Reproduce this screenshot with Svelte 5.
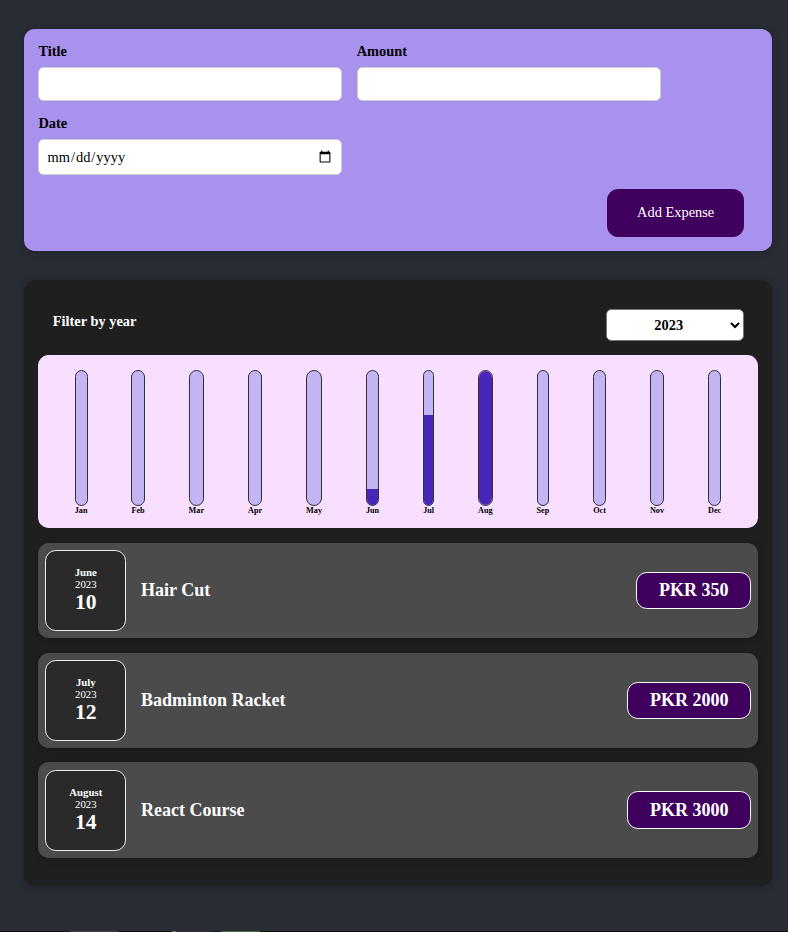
<script>
  const months = [
    { label: 'Jan', fill: 0 },
    { label: 'Feb', fill: 0 },
    { label: 'Mar', fill: 0 },
    { label: 'Apr', fill: 0 },
    { label: 'May', fill: 0 },
    { label: 'Jun', fill: 11.67 },
    { label: 'Jul', fill: 66.67 },
    { label: 'Aug', fill: 100 },
    { label: 'Sep', fill: 0 },
    { label: 'Oct', fill: 0 },
    { label: 'Nov', fill: 0 },
    { label: 'Dec', fill: 0 }
  ];

  const expenses = [
    { month: 'June', year: 2023, day: 10, title: 'Hair Cut', amount: 350 },
    { month: 'July', year: 2023, day: 12, title: 'Badminton Racket', amount: 2000 },
    { month: 'August', year: 2023, day: 14, title: 'React Course', amount: 3000 }
  ];
</script>

<div class="page">
  <main>
    <section class="new-expense">
      <form>
        <div class="controls">
          <div class="control">
            <label for="title">Title</label>
            <input id="title" type="text" />
          </div>
          <div class="control">
            <label for="amount">Amount</label>
            <input id="amount" type="number" />
          </div>
          <div class="control">
            <label for="date">Date</label>
            <input id="date" type="date" />
          </div>
        </div>
        <div class="actions">
          <button type="button">Add Expense</button>
        </div>
      </form>
    </section>

    <section class="expenses">
      <div class="filter">
        <label for="year">Filter by year</label>
        <select id="year">
          <option>2023</option>
          <option>2022</option>
          <option>2021</option>
        </select>
      </div>

      <div class="chart">
        {#each months as m}
          <div class="bar">
            <div class="inner">
              <div class="fill" style="height: {m.fill}%"></div>
            </div>
            <div class="bar-label">{m.label}</div>
          </div>
        {/each}
      </div>

      <ul>
        {#each expenses as e}
          <li class="item">
            <div class="date">
              <div class="month">{e.month}</div>
              <div class="year">{e.year}</div>
              <div class="day">{e.day}</div>
            </div>
            <div class="desc">
              <h2>{e.title}</h2>
              <div class="price">PKR {e.amount}</div>
            </div>
          </li>
        {/each}
      </ul>
    </section>
  </main>

  <div class="strip">
    <span class="s1"></span>
    <span class="s2"></span>
    <span class="s3"></span>
    <span class="s4"></span>
  </div>
</div>

<style>
  :global(body) {
    margin: 0;
    background: #282c35;
    font-family: "Liberation Serif", "Times New Roman", serif;
    font-size: 14.4px;
  }

  .page {
    height: 932px;
    display: flex;
    flex-direction: column;
    overflow: hidden;
  }

  main {
    flex: 1;
    min-height: 0;
    padding-left: 8px;
  }

  .new-expense {
    background: #a892ee;
    padding: 14.4px;
    margin: 28.8px auto;
    width: 748px;
    box-sizing: border-box;
    border-radius: 10.8px;
    box-shadow: 0 1px 7px rgba(0, 0, 0, 0.25);
  }

  .controls {
    display: flex;
    flex-wrap: wrap;
    gap: 14.4px;
    margin-bottom: 14.4px;
  }

  .control label {
    display: block;
    font-weight: bold;
    margin-bottom: 7.2px;
  }

  .control input {
    font: inherit;
    padding: 7.2px;
    border-radius: 5.4px;
    border: 1px solid #ccc;
    width: 287.5px;
    background: #fff;
    color: #000;
  }

  .actions {
    text-align: right;
  }

  button {
    font: inherit;
    padding: 14.4px 28.8px;
    border: 1px solid #40005d;
    background: #40005d;
    color: #fff;
    border-radius: 10.8px;
    margin-right: 13.6px;
  }

  .expenses {
    background: #1f1f1f;
    padding: 14.4px;
    margin: 28.8px auto;
    width: 748px;
    box-sizing: border-box;
    border-radius: 10.8px;
    box-shadow: 0 1px 7px rgba(0, 0, 0, 0.25);
  }

  .filter {
    display: flex;
    justify-content: space-between;
    align-items: center;
    color: #fff;
    margin: 14.4px 0;
    padding: 0 13.8px 0 14.4px;
  }

  .filter label {
    display: block;
    font-weight: bold;
    margin-bottom: 7.2px;
  }

  select {
    font: inherit;
    font-weight: bold;
    height: 32px;
    padding: 0 43.5px;
    border-radius: 5.4px;
    background: #fff;
    color: #000;
    border: 1px solid #767676;
  }

  .chart {
    padding: 14.4px;
    border-radius: 10.8px;
    background: #f8dfff;
    display: flex;
    justify-content: space-around;
    height: 144px;
  }

  .bar {
    height: 100%;
    display: flex;
    flex-direction: column;
    align-items: center;
  }

  .inner {
    height: 100%;
    width: 100%;
    box-sizing: border-box;
    border: 1px solid #313131;
    border-radius: 10.8px;
    background: #c3b4f3;
    display: flex;
    flex-direction: column;
    justify-content: flex-end;
    overflow: hidden;
  }

  .fill {
    background: #4826b9;
    width: 100%;
  }

  .bar-label {
    font-weight: bold;
    font-size: 8.2px;
    line-height: 10px;
    margin-bottom: -2px;
    text-align: center;
  }

  ul {
    list-style: none;
    margin: 14.7px 0 0;
    padding: 0 0 14.2px;
    display: flex;
    flex-direction: column;
    gap: 14.45px;
  }

  .item {
    display: flex;
    align-items: center;
    justify-content: space-between;
    padding: 7.2px 6.6px 7.2px 7px;
    border-radius: 10.8px;
    background: #4b4b4b;
    box-shadow: 0 1px 7px rgba(0, 0, 0, 0.25);
  }

  .date {
    display: flex;
    flex-direction: column;
    align-items: center;
    justify-content: center;
    flex: none;
    width: 78.8px;
    height: 79px;
    border: 1px solid #ececec;
    background: #2a2a2a;
    color: #fff;
    border-radius: 10.8px;
  }

  .month {
    font-size: 10.8px;
    font-weight: bold;
  }

  .year {
    font-size: 10.8px;
  }

  .day {
    font-size: 21.6px;
    font-weight: bold;
  }

  .desc {
    display: flex;
    flex: 1;
    align-items: center;
    justify-content: space-between;
  }

  h2 {
    color: #fff;
    font-size: 18px;
    flex: 1;
    margin: 0 14.4px 0 14.8px;
  }

  .price {
    font-size: 18px;
    font-weight: bold;
    color: #fff;
    background: #40005d;
    border: 1px solid #fff;
    padding: 7.2px 21.6px;
    border-radius: 10.8px;
  }

  .strip {
    flex: none;
    height: 1px;
    display: flex;
    background: #111;
  }

  .strip span {
    display: block;
    height: 100%;
  }

  .s1 {
    width: 48px;
    margin-left: 70px;
    background: #444;
  }

  .s2 {
    width: 4px;
    margin-left: 54px;
    background: #7a7040;
  }

  .s3 {
    width: 36px;
    background: #2c2c2c;
  }

  .s4 {
    width: 39px;
    margin-left: 9px;
    background: #47693c;
  }
</style>
